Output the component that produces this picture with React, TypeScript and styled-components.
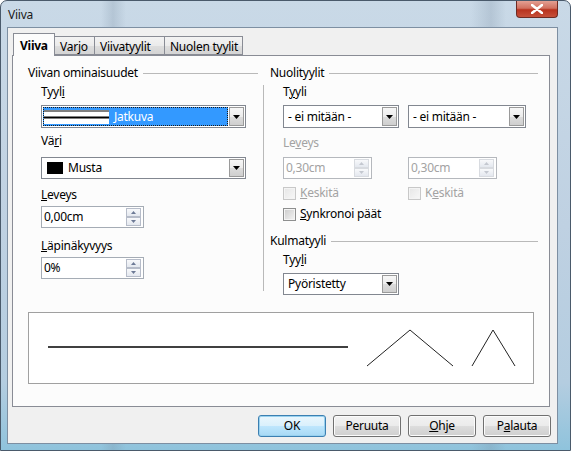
import styled, { createGlobalStyle } from 'styled-components';

const GlobalStyle = createGlobalStyle`
  html, body {
    margin: 0;
    padding: 0;
  }
  body {
    font-family: "Noto Sans", "DejaVu Sans", sans-serif;
    font-size: 12px;
    letter-spacing: -0.25px;
    color: #000;
  }
`;

function Mn({ text, at }: { text: string; at: number }) {
    return (
        <>
            {text.slice(0, at)}
            <u>{text[at]}</u>
            {text.slice(at + 1)}
        </>
    );
}

function Arrow() {
    return (
        <svg width="7" height="4" viewBox="0 0 7 4">
            <path d="M0 0h7L3.5 4z" fill="#000" />
        </svg>
    );
}

function Dropdown({ value, width, height = 22, selected, swatch }: { value: string; width: number; height?: number; selected?: boolean; swatch?: boolean }) {
    return (
        <Combo $w={width} $h={height}>
            <ComboField $selected={selected}>
                {selected && (
                    <LinePreview>
                        <svg width="65" height="14" viewBox="0 0 65 14">
                            <rect width="65" height="14" fill="#fff" />
                            <line x1="0" y1="1" x2="65" y2="1" stroke="#000" strokeWidth="1" />
                            <line x1="0" y1="7.5" x2="65" y2="7.5" stroke="#000" strokeWidth="2" />
                        </svg>
                    </LinePreview>
                )}
                {swatch && <Swatch />}
                <ComboText $selected={selected}>{value}</ComboText>
            </ComboField>
            <ComboButton>
                <Arrow />
            </ComboButton>
        </Combo>
    );
}

function Spin({ value, width, disabled }: { value: string; width: number; disabled?: boolean }) {
    const c = disabled ? '#c4c8d0' : '#6d7a96';
    return (
        <SpinBox $w={width} $disabled={disabled}>
            <SpinText>{value}</SpinText>
            <SpinButtons>
                <SpinButton $disabled={disabled}>
                    <svg width="5" height="3" viewBox="0 0 5 3"><path d="M0 3L2.5 0L5 3z" fill={c} /></svg>
                </SpinButton>
                <SpinButton $disabled={disabled}>
                    <svg width="5" height="3" viewBox="0 0 5 3"><path d="M0 0h5L2.5 3z" fill={c} /></svg>
                </SpinButton>
            </SpinButtons>
        </SpinBox>
    );
}

export default function App() {
    return (
        <>
            <GlobalStyle />
            <Window>
                <TitleBar>
                    <Title>Viiva</Title>
                    <CloseButton>
                        <svg width="12" height="10" viewBox="0 0 12 10">
                            <path d="M1 1L11 9M11 1L1 9" stroke="#fff" strokeWidth="2.6" strokeLinecap="round" />
                        </svg>
                    </CloseButton>
                </TitleBar>
                <Client>
                    <TabStrip>
                        <Tab $active $w={42}>Viiva</Tab>
                        <Tab $w={41}>Varjo</Tab>
                        <Tab $w={71}>Viivatyylit</Tab>
                        <Tab $w={79}>Nuolen tyylit</Tab>
                    </TabStrip>
                    <Panel>
                        <Columns>
                            <LeftColumn>
                                <GroupHeader>
                                    <span>Viivan ominaisuudet</span>
                                    <Rule />
                                </GroupHeader>
                                <Indent>
                                    <Label $mt={3}><Mn text="Tyyli" at={4} /></Label>
                                    <Gap $h={5} />
                                    <Dropdown value="Jatkuva" width={205} height={23} selected />
                                    <Label $mt={5}><Mn text="Väri" at={2} /></Label>
                                    <Gap $h={8} />
                                    <Dropdown value="Musta" width={205} swatch />
                                    <Label $mt={8}><Mn text="Leveys" at={0} /></Label>
                                    <Gap $h={3} />
                                    <Spin value="0,00cm" width={103} />
                                    <Label $mt={10}><Mn text="Läpinäkyvyys" at={0} /></Label>
                                    <Gap $h={3} />
                                    <Spin value="0%" width={103} />
                                </Indent>
                            </LeftColumn>
                            <Separator />
                            <RightColumn>
                                <GroupHeader>
                                    <span>Nuolityylit</span>
                                    <Rule />
                                </GroupHeader>
                                <Indent>
                                    <Label $mt={3}><Mn text="Tyyli" at={1} /></Label>
                                    <Gap $h={5} />
                                    <Pair>
                                        <Dropdown value="- ei mitään -" width={116} height={23} />
                                        <Dropdown value="- ei mitään -" width={118} height={23} />
                                    </Pair>
                                    <Label $mt={7} $disabled><Mn text="Leveys" at={2} /></Label>
                                    <Gap $h={6} />
                                    <Pair>
                                        <Spin value="0,30cm" width={89} disabled />
                                        <Spin value="0,30cm" width={89} disabled />
                                    </Pair>
                                    <Gap $h={6} />
                                    <Pair>
                                        <CheckRow $disabled>
                                            <Check $disabled />
                                            <span><Mn text="Keskitä" at={0} /></span>
                                        </CheckRow>
                                        <CheckRow $disabled>
                                            <Check $disabled />
                                            <span><Mn text="Keskitä" at={1} /></span>
                                        </CheckRow>
                                    </Pair>
                                    <Gap $h={5} />
                                    <CheckRow>
                                        <Check />
                                        <span><Mn text="Synkronoi päät" at={0} /></span>
                                    </CheckRow>
                                </Indent>
                                <Gap $h={11} />
                                <GroupHeader>
                                    <span>Kulmatyyli</span>
                                    <Rule />
                                </GroupHeader>
                                <Indent>
                                    <Label $mt={3}><Mn text="Tyyli" at={3} /></Label>
                                    <Gap $h={5} />
                                    <Dropdown value="Pyöristetty" width={116} />
                                </Indent>
                            </RightColumn>
                        </Columns>
                        <Preview>
                            <svg width="506" height="72" viewBox="0 0 506 72">
                                <line x1="20" y1="35" x2="320" y2="35" stroke="#000" strokeWidth="1.3" />
                                <polyline points="339,54 382,18 425,54" fill="none" stroke="#222" strokeWidth="1" />
                                <polyline points="444,54 465,18 487,54" fill="none" stroke="#222" strokeWidth="1" />
                            </svg>
                        </Preview>
                    </Panel>
                    <ButtonRow>
                        <Button $default>OK</Button>
                        <Button>Peruuta</Button>
                        <Button><Mn text="Ohje" at={0} /></Button>
                        <Button><Mn text="Palauta" at={1} /></Button>
                    </ButtonRow>
                </Client>
            </Window>
        </>
    );
}

const Window = styled.div`
    width: 571px;
    height: 451px;
    box-sizing: border-box;
    display: flex;
    flex-direction: column;
    border: 1px solid #4a5a6b;
    border-radius: 7px 7px 0 0;
    background:
        linear-gradient(to right, transparent 0, transparent 100px, rgba(120,140,160,0.25) 112px, transparent 125px, transparent 470px, rgba(120,140,160,0.25) 490px, transparent 505px),
        linear-gradient(to bottom, #c9d9e7 0%, #bfd1e2 50%, #b4cde0 85%, #8fc3dc 100%);
    overflow: hidden;
`

const TitleBar = styled.div`
    height: 26px;
    display: flex;
    align-items: flex-start;
    padding-left: 7px;
`

const Title = styled.div`
    margin-top: 5px;
    font-size: 12px;
    color: #1a1a1a;
`

const CloseButton = styled.div`
    margin-left: auto;
    margin-right: 12px;
    width: 42px;
    height: 17px;
    box-sizing: border-box;
    border: 1px solid #6e2a22;
    border-top: none;
    border-radius: 0 0 4px 4px;
    background: linear-gradient(to bottom, #e4a093 0%, #d1705f 45%, #b8321e 55%, #c6503a 100%);
    display: flex;
    align-items: center;
    justify-content: center;
`

const Client = styled.div`
    flex: 1;
    margin: 0 12px 6px 6px;
    border: 1px solid #7d8fa2;
    background: #f0f0f0;
    display: flex;
    flex-direction: column;
`

const TabStrip = styled.div`
    display: flex;
    align-items: flex-end;
    height: 22px;
    margin-top: 5px;
    padding-left: 5px;
`

const Tab = styled.div<{ $active?: boolean; $w: number }>`
    position: relative;
    z-index: ${p => (p.$active ? 2 : 1)};
    box-sizing: border-box;
    width: ${p => p.$w}px;
    height: ${p => (p.$active ? 23 : 19)}px;
    margin-bottom: ${p => (p.$active ? -1 : 0)}px;
    margin-left: ${p => (p.$active ? 0 : -1)}px;
    border: 1px solid #898c95;
    border-bottom: ${p => (p.$active ? 'none' : '1px solid #898c95')};
    background: ${p => (p.$active ? '#fcfcfc' : 'linear-gradient(to bottom, #f3f3f3 0%, #ebebeb 50%, #dedede 51%, #d4d4d4 100%)')};
    font-weight: ${p => (p.$active ? 700 : 400)};
    padding-left: ${p => (p.$active ? 6 : 5)}px;
    padding-top: ${p => (p.$active ? 3 : 1)}px;
    white-space: nowrap;
    &:first-child {
        margin-left: 0;
    }
`

const Panel = styled.div`
    height: 352px;
    box-sizing: border-box;
    margin: 0 7px 0 4px;
    border: 1px solid #898c95;
    background: #fcfcfc;
    padding: 9px 11px 0 15px;
    display: flex;
    flex-direction: column;
`

const Columns = styled.div`
    display: flex;
    height: 234px;
`

const LeftColumn = styled.div`
    width: 230px;
    display: flex;
    flex-direction: column;
`

const RightColumn = styled.div`
    flex: 1;
    display: flex;
    flex-direction: column;
`

const Separator = styled.div`
    width: 1px;
    height: 206px;
    margin: 20px 6px 0 5px;
    background: #b9b9b9;
`

const GroupHeader = styled.div`
    display: flex;
    align-items: center;
    gap: 5px;
    height: 16px;
    line-height: 16px;
    white-space: nowrap;
`

const Rule = styled.div`
    flex: 1;
    height: 1px;
    background: #b9b9b9;
`

const Indent = styled.div`
    display: flex;
    flex-direction: column;
    align-items: flex-start;
    padding-left: 13px;
`

const Label = styled.div<{ $mt: number; $disabled?: boolean }>`
    margin-top: ${p => p.$mt}px;
    height: 16px;
    line-height: 16px;
    color: ${p => (p.$disabled ? '#a3a3a3' : '#000')};
`

const Gap = styled.div<{ $h: number }>`
    height: ${p => p.$h}px;
    flex-shrink: 0;
`

const Pair = styled.div`
    display: grid;
    grid-template-columns: 125px auto;
    align-items: center;
`

const Combo = styled.div<{ $w: number; $h: number }>`
    width: ${p => p.$w}px;
    height: ${p => p.$h}px;
    box-sizing: border-box;
    border: 1px solid #828790;
    background: #fff;
    display: flex;
    padding: 1px;
    gap: 1px;
`

const ComboField = styled.div<{ $selected?: boolean }>`
    flex: 1;
    display: flex;
    align-items: center;
    gap: 5px;
    padding-left: ${p => (p.$selected ? 1 : 3)}px;
    background: ${p => (p.$selected ? '#3399ff' : 'transparent')};
    outline: ${p => (p.$selected ? '1px dotted #1a1a1a' : 'none')};
    outline-offset: -1px;
    overflow: hidden;
`

const LinePreview = styled.div`
    display: flex;
    align-items: center;
`

const Swatch = styled.div`
    width: 16px;
    height: 12px;
    background: #000;
    margin-left: 1px;
`

const ComboText = styled.span<{ $selected?: boolean }>`
    color: ${p => (p.$selected ? '#fff' : '#000')};
    white-space: nowrap;
    line-height: 16px;
`

const ComboButton = styled.div`
    width: 15px;
    box-sizing: border-box;
    border: 1px solid #9a9a9a;
    background: linear-gradient(to bottom, #f7f7f7 0%, #ececec 50%, #dcdcdc 51%, #cfcfcf 100%);
    display: flex;
    align-items: center;
    justify-content: center;
`

const SpinBox = styled.div<{ $w: number; $disabled?: boolean }>`
    width: ${p => p.$w}px;
    height: 22px;
    box-sizing: border-box;
    border: 1px solid ${p => (p.$disabled ? '#b5b8bd' : '#a5acb5')};
    background: #fff;
    display: flex;
    align-items: center;
    padding: 1px 1px 1px 2px;
    color: ${p => (p.$disabled ? '#a3a3a3' : '#000')};
`

const SpinText = styled.span`
    flex: 1;
    line-height: 16px;
`

const SpinButtons = styled.div`
    width: 15px;
    height: 18px;
    display: flex;
    flex-direction: column;
    margin-right: 1px;
`

const SpinButton = styled.div<{ $disabled?: boolean }>`
    flex: 1;
    box-sizing: border-box;
    border: 1px solid ${p => (p.$disabled ? '#d8dbe0' : '#b6bcc9')};
    background: linear-gradient(to bottom, #f8f9fb, #e4e8ef);
    display: flex;
    align-items: center;
    justify-content: center;
`

const CheckRow = styled.div<{ $disabled?: boolean }>`
    display: flex;
    align-items: center;
    gap: 4px;
    height: 16px;
    line-height: 16px;
    color: ${p => (p.$disabled ? '#a3a3a3' : '#000')};
`

const Check = styled.div<{ $disabled?: boolean }>`
    width: 13px;
    height: 13px;
    box-sizing: border-box;
    border: 1px solid ${p => (p.$disabled ? '#c8c8c8' : '#8e8f8f')};
    background: ${p => (p.$disabled
        ? 'linear-gradient(135deg, #e6e6e6, #f8f8f8)'
        : 'linear-gradient(135deg, #cbcbcb, #f4f4f4)')};
    box-shadow: inset 0 0 0 1px #f4f4f4;
`

const Preview = styled.div`
    margin-top: 13px;
    width: 506px;
    height: 72px;
    box-sizing: border-box;
    border: 1px solid #a0a0a0;
    background: #fff;
    & svg {
        display: block;
        margin: -1px;
    }
`

const ButtonRow = styled.div`
    display: flex;
    justify-content: flex-end;
    gap: 7px;
    margin-top: 8px;
    padding-right: 6px;
`

const Button = styled.div<{ $default?: boolean }>`
    width: 68px;
    height: 22px;
    box-sizing: border-box;
    border: 1px solid ${p => (p.$default ? '#3c7fb1' : '#707070')};
    border-radius: 3px;
    background: ${p => (p.$default
        ? 'linear-gradient(to bottom, #eaf6fd 0%, #d9f0fc 50%, #bee6fd 51%, #a7d9f5 100%)'
        : 'linear-gradient(to bottom, #f2f2f2 0%, #ebebeb 50%, #dddddd 51%, #cfcfcf 100%)')};
    box-shadow: inset 0 0 0 1px ${p => (p.$default ? '#98d1ef' : '#fcfcfc')};
    display: flex;
    align-items: center;
    justify-content: center;
    line-height: 16px;
`
